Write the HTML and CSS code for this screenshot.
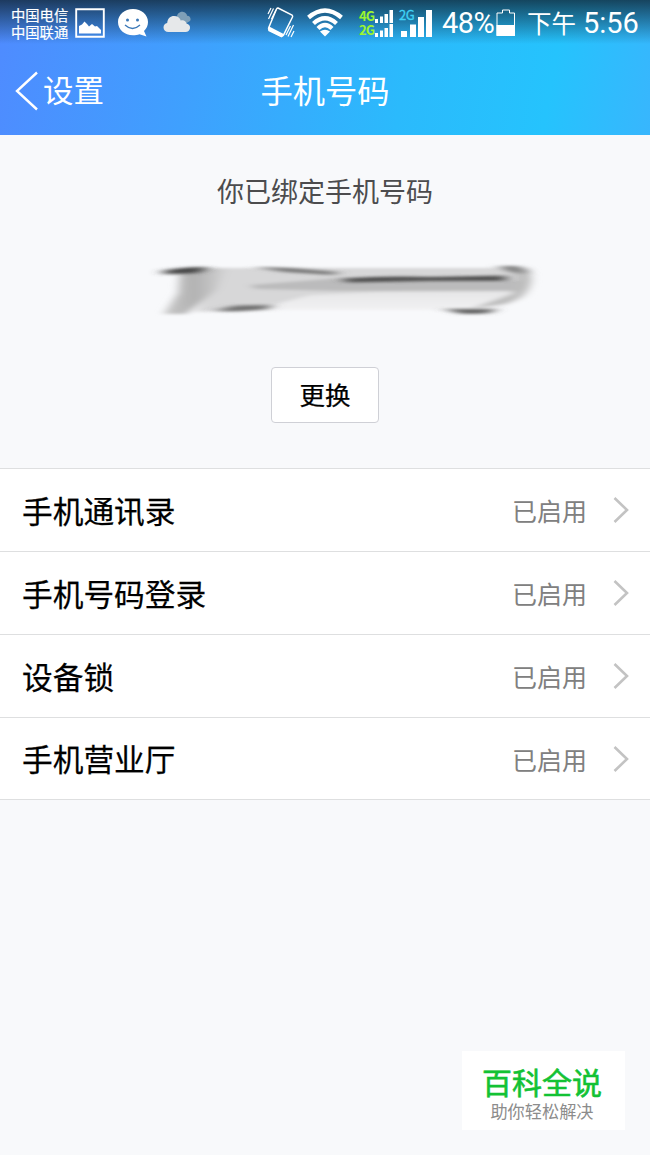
FILE: index.html
```html
<!DOCTYPE html>
<html lang="zh-CN">
<head>
  <meta charset="utf-8" />
  <title>手机号码</title>
  <meta name="viewport" content="width=device-width, initial-scale=1.0">
  <link rel="stylesheet" href="styles.css">
</head>
<body>
  <header class="top">
    <!-- Status bar -->
    <div class="status">
      <div class="carriers"><span>中国电信</span><span>中国联通</span></div>
      <svg class="ico-picture" width="30" height="30" viewBox="0 0 30 30">
        <path d="M1.2 1.2H28.8V28.8H1.2Z" fill="none" stroke="#fff" stroke-width="1.9"/>
        <path d="M4 25.500V18L7 16.500L9.500 13.500L12 16L14 18.500L17 16L20 18.500L22 18L26 22V25.500Z" fill="#fff"/>
      </svg>
      <svg class="ico-chat" width="32" height="30" viewBox="0 0 32 30">
        <path d="M16 1C24.500 1 31 6.800 31 14C31 17.600 29.600 20.600 27 23L29.500 28.500L22.500 26.200C20.500 27 18.400 27.300 16 27.300C7.500 27.300 1 21.500 1 14C1 6.800 7.500 1 16 1Z" fill="#fff"/>
        <circle cx="10.500" cy="12" r="1.500" fill="#3a78b8"/>
        <circle cx="20.500" cy="12" r="1.500" fill="#3a78b8"/>
        <path d="M8 17Q15.500 24 23 17" fill="none" stroke="#3a78b8" stroke-width="1.300"/>
      </svg>
      <svg class="ico-cloud" width="28" height="22" viewBox="0 0 28 22">
        <path d="M14 7C13.500 3 17 0 20.500 1C22.500 1.500 24 3 24 4.700C27 4.500 28.500 8 27 10L22 13Z" fill="#7e9fb8"/>
        <path d="M5.500 21C2.500 21 .5 19 .5 16.500C.5 14 2 12.300 4.200 12C4.500 7.500 7.500 5 11 5C14.500 5 17 7 17.800 9.500C20.500 8.500 23 10 23.500 12.500C26 13 27.300 15 27 17.200C26.600 19.600 25 21 22.500 21Z" fill="#e6e8ea"/>
      </svg>
      <svg class="ico-vibrate" width="28" height="32" viewBox="0 0 28 32" fill="none" stroke="#fff" stroke-width="1.500">
        <path d="M11 2L25 9Q26 10 25.500 11L16.500 29Q15.500 30.500 14 30L2.500 24Q1 23 2 21L9.500 3Q10 1.700 11 2Z"/>
        <path d="M2.300 21.500L16 28.500L14.500 30.500L2 24.500Z" fill="#fff"/>
        <path d="M1.500 13L6.500 2.500M4.500 13L9 4M1 8L4 2M26.500 19L21 30.500M23.500 20L19 29M27 25L24 31" stroke-width="1.200"/>
      </svg>
      <svg class="ico-wifi" width="38" height="29" viewBox="0 0 38 29">
        <g fill="none" stroke="#fff" stroke-width="4.300">
          <path d="M2.500 9.500Q19 -4.500 35.500 9.500"/>
          <path d="M7.500 15.500Q19 5.200 30.500 15.500"/>
          <path d="M12 20.500Q19 13.700 26 20.500"/>
        </g>
        <path d="M14 23.500Q19 20 24 23.500L19 28.500Z" fill="#fff"/>
      </svg>
      <div class="sims">
        <div class="sim">
          <span class="net">4G</span>
          <svg width="18" height="13" viewBox="0 0 18 13" fill="#fff"><path d="M0 9h3v4H0zM5 6.500h3V13H5zM9.500 4h3.500v9H9.500zM14.500 0H18v13H14.500z"/></svg>
        </div>
        <div class="sim">
          <span class="net">2G</span>
          <svg width="18" height="13" viewBox="0 0 18 13" fill="#fff"><path d="M0 9h3v4H0zM5 6.500h3V13H5zM9.500 4h3.500v9H9.500zM14.500 0H18v13H14.500z"/></svg>
        </div>
      </div>
      <span class="net-2g">2G</span>
      <svg class="ico-signal" width="32" height="28" viewBox="0 0 32 28" fill="#fff"><path d="M0 21h6v6H0zM9 14.500h6V27H9zM17 7h6v20H17zM25 0h6v27H25z"/></svg>
      <span class="percent">48%</span>
      <svg class="ico-battery" width="20" height="28" viewBox="0 0 20 28">
        <path d="M1 4H6.500V1H13.500V4H18.500V26.500H1Z" fill="none" stroke="#fff" stroke-width="1"/>
        <path d="M.5 16H19V27H.5Z" fill="#fff"/>
      </svg>
      <span class="ampm">下午</span>
      <span class="clock">5:56</span>
    </div>

    <!-- Title bar -->
    <div class="titlebar">
      <a class="back">
        <svg width="24" height="40" viewBox="0 0 24 40"><path d="M22 1.500L2 20L22 38.500" fill="none" stroke="#fff" stroke-width="2.400"/></svg>
        <span>设置</span>
      </a>
      <h1>手机号码</h1>
    </div>
  </header>

  <section class="bound">
    <p class="bound-text">你已绑定手机号码</p>
    <!-- smudged out phone number -->
    <svg class="smudge" width="460" height="80" viewBox="120 250 460 80">
      <defs>
        <filter id="soft" x="-20%" y="-50%" width="140%" height="200%"><feGaussianBlur stdDeviation="5 1.800"/></filter>
        <filter id="line" x="-20%" y="-200%" width="140%" height="500%"><feGaussianBlur stdDeviation="7 1.500"/></filter>
        <linearGradient id="stem" x1="0" x2="1"><stop offset="0" stop-color="#c8c8c8"/><stop offset=".5" stop-color="#b2b2b2"/><stop offset="1" stop-color="#d2d2d3"/></linearGradient>
        <linearGradient id="under" x1="0" x2="0" y1="0" y2="1"><stop offset="0" stop-color="#d6d6d7"/><stop offset=".6" stop-color="#e8e8e9"/><stop offset="1" stop-color="#f3f3f5"/></linearGradient>
      </defs>
      <g filter="url(#soft)">
        <path d="M185 268H530Q535 285 524 298L490 312L430 310H285L215 312L165 313L180 290Z" fill="url(#under)"/>
        <path d="M215 268L340 270L525 268L524 291L380 292L310 295L265 307L196 312L215 285Z" fill="#d7d7d8"/>
        <path d="M180 270L226 268L216 290L186 314H164L178 293Z" fill="url(#stem)"/>
        <path d="M250 285L340 278L522 281V291L340 291L255 289Z" fill="#bbbbbc"/>
        <path d="M508 267Q531 267 531 280Q529 297 505 304L470 309L512 294L518 278Z" fill="#bdbdbd"/>
      </g>
      <g filter="url(#line)">
        <path d="M164 270.500Q180 267 208 267L198 273L164 274.500Z" fill="#444"/>
        <path d="M254 267L290 268L338 272L334 275L285 272Z" fill="#757575"/>
        <path d="M343 278.500Q390 275.500 430 277L506 275.500V281H430L346 282.500Z" fill="#505050"/>
        <path d="M214 311L235 305.500L272 305L266 309.500L235 311.500Z" fill="#707070"/>
        <path d="M444 309H496L488 313.500L462 314Z" fill="#606060"/>
        <path d="M498 266H518L526 274L510 271.500Z" fill="#777"/>
      </g>
    </svg>
    <button class="change">更换</button>
  </section>

  <ul class="list">
    <li><span class="name">手机通讯录</span><span class="state">已启用</span><svg class="arrow" width="16" height="28" viewBox="0 0 16 28"><path d="M1.500 2L14 14L1.500 26"/></svg></li>
    <li><span class="name">手机号码登录</span><span class="state">已启用</span><svg class="arrow" width="16" height="28" viewBox="0 0 16 28"><path d="M1.500 2L14 14L1.500 26"/></svg></li>
    <li><span class="name">设备锁</span><span class="state">已启用</span><svg class="arrow" width="16" height="28" viewBox="0 0 16 28"><path d="M1.500 2L14 14L1.500 26"/></svg></li>
    <li><span class="name">手机营业厅</span><span class="state">已启用</span><svg class="arrow" width="16" height="28" viewBox="0 0 16 28"><path d="M1.500 2L14 14L1.500 26"/></svg></li>
  </ul>

  <div class="mark">
    <strong>百科全说</strong>
    <span>助你轻松解决</span>
  </div>
</body>
</html>
```
FILE: styles.css
```css
* {
  box-sizing: border-box;
}
body {
  margin: 0;
  min-height: 1155px;
  position: relative;
  background: #f8f9fb;
  font-family: Roboto, "Noto Sans CJK SC", sans-serif;
  color: #000;
}
svg {
  display: block;
  flex: none;
}
.top {
  height: 135px;
  color: #fff;
  background:
    linear-gradient(rgba(15, 35, 50, 0.78), rgba(15, 45, 65, 0.5) 18px, rgba(15, 60, 90, 0) 44px),
    linear-gradient(100deg, #4f8bff 0%, #3fa0fe 30%, #2bbafc 62%, #25c3fd 84%, #38b6fd 100%);
}

/* status bar */
.status {
  display: flex;
  align-items: flex-start;
  height: 46px;
  padding-left: 11px;
  white-space: nowrap;
}
.carriers {
  display: flex;
  flex-direction: column;
  width: 58px;
  margin-top: 8px;
  font-size: 14.3px;
  line-height: 17px;
  -webkit-text-stroke: 0.2px #fff;
}
.ico-picture { margin: 8px 0 0 6px; }
.ico-chat { margin: 8px 0 0 12px; }
.ico-cloud { margin: 11px 0 0 14px; }
.ico-vibrate { margin: 6px 0 0 76px; }
.ico-wifi { margin: 8px 0 0 11px; }
.sims {
  width: 34px;
  margin: 9px 0 0 15px;
}
.sim {
  display: flex;
  align-items: center;
  justify-content: space-between;
  height: 14px;
}
.net, .net-2g {
  font-family: "Noto Sans CJK SC", sans-serif;
  font-weight: 700;
  font-size: 13px;
  letter-spacing: -0.9px;
  line-height: 14px;
  color: #9bf52f;
}
.net-2g {
  width: 15px;
  margin: 8px 0 0 6px;
  font-weight: 400;
  letter-spacing: -0.4px;
  -webkit-text-stroke: 0.3px #3fd2f5;
  color: #3fd2f5;
}
.ico-signal { margin: 10px 0 0 -13px; }
.percent, .clock {
  font-size: 29px;
  line-height: 34px;
  margin-top: 6px;
}
.percent {
  width: 54px;
  margin-left: 9px;
  letter-spacing: -0.5px;
}
.ico-battery { margin: 9px 0 0 0; }
.ampm {
  width: 48px;
  margin: 8px 0 0 11px;
  font-size: 24.5px;
  line-height: 34px;
}
.clock { margin-left: 8px; }

/* title bar */
.titlebar {
  display: grid;
  grid-template-columns: 1fr auto 1fr;
  align-items: center;
  height: 89px;
  padding: 0 15px;
}
.back {
  display: flex;
  align-items: center;
  gap: 4px;
  font-size: 30.5px;
}
.back span {
  margin-bottom: 3px;
}
h1 {
  margin: 0 0 3px;
  font-size: 32.3px;
  font-weight: 400;
}

.bound {
  display: flex;
  flex-direction: column;
  align-items: center;
  height: 333px;
}
.bound-text {
  margin: 38px 0 0;
  font-size: 27px;
  line-height: 40px;
  color: #4c4c4e;
}
.smudge {
  margin: 37px 0 0 50px;
}
.change {
  width: 108px;
  height: 56px;
  margin-top: 37px;
  padding: 0 0 3px;
  border: 1px solid #cfd0d6;
  border-radius: 4px;
  background: #fff;
  font: 400 25.5px "Noto Sans CJK SC", sans-serif;
  color: #000;
  -webkit-text-stroke: 0.25px #000;
}

.list {
  list-style: none;
  margin: 0;
  padding: 0;
  border-top: 1px solid #dedfe0;
  background: #fff;
}
.list li {
  display: flex;
  align-items: center;
  height: 83px;
  padding: 0 21px 0 22px;
  border-bottom: 1px solid #dedfe0;
}
.list li:last-child {
  height: 82px;
}
.name {
  flex: 1;
  margin-bottom: 2px;
  font-size: 30.7px;
  -webkit-text-stroke: 0.25px #000;
}
.state {
  font-size: 25px;
  color: #808080;
  margin-right: 26px;
}
.arrow {
  fill: none;
  stroke: #c3c3c3;
  stroke-width: 2.6;
}

/* corner mark, sits over the page */
.mark {
  position: absolute;
  left: 462px;
  top: 1051px;
  width: 163px;
  height: 79px;
  display: flex;
  flex-direction: column;
  align-items: center;
  background: #fff;
}
.mark strong {
  margin-top: 15px;
  margin-right: 3px;
  font-size: 30px;
  line-height: 36px;
  font-weight: 400;
  color: #12c234;
  -webkit-text-stroke: 0.6px #12c234;
}
.mark span {
  margin-right: 3px;
  font-size: 17.2px;
  line-height: 21px;
  color: #8c8c8c;
}
```
